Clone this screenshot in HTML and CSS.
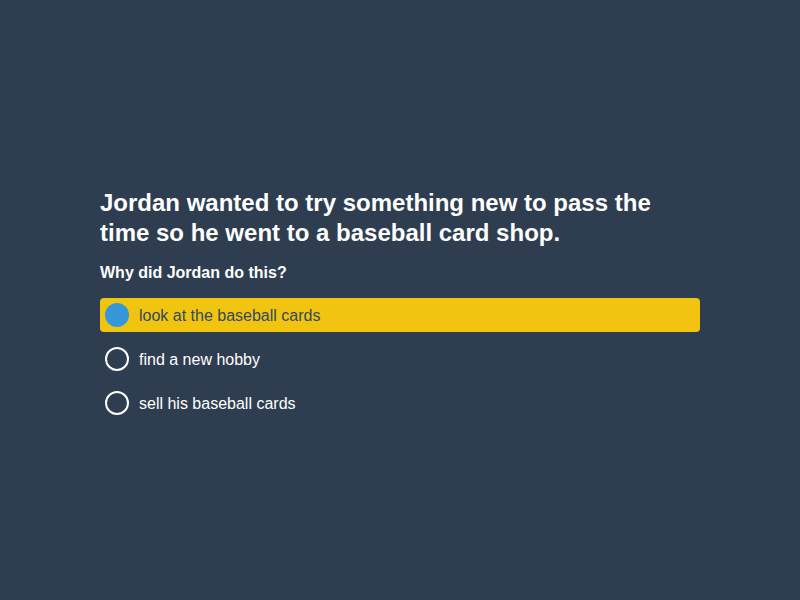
FILE: index.html
```html
<!DOCTYPE html>
<html>
<head>
<meta charset="utf-8">
<link rel="stylesheet" href="styles.css">
</head>
<body>
<main class="quiz">
  <h1 class="prompt">Jordan wanted to try something new to pass the time so he went to a baseball card shop.</h1>
  <p class="question">Why did Jordan do this?</p>
  <ul class="options">
    <li class="option selected"><span class="radio"></span><span class="label">look at the baseball cards</span></li>
    <li class="option"><span class="radio"></span><span class="label">find a new hobby</span></li>
    <li class="option"><span class="radio"></span><span class="label">sell his baseball cards</span></li>
  </ul>
</main>
</body>
</html>
```
FILE: styles.css
```css
html, body {
  margin: 0;
  padding: 0;
  background: #2e3e50;
  height: 100%;
}
body {
  font-family: "Liberation Sans", Arial, sans-serif;
  color: #ffffff;
}
.quiz {
  width: 600px;
  margin-left: 100px;
  padding-top: 188px;
}
.prompt {
  margin: 0;
  font-size: 24px;
  line-height: 30px;
  font-weight: bold;
  width: 560px;
}
.question {
  margin: 14px 0 0;
  padding-top: 1px;
  font-size: 16px;
  line-height: 20px;
  font-weight: bold;
}
.options {
  list-style: none;
  margin: 15px 0 0;
  padding: 0;
  display: flex;
  flex-direction: column;
  gap: 10px;
}
.option {
  display: flex;
  align-items: center;
  gap: 10px;
  height: 34px;
  padding: 0 5px;
  border-radius: 4px;
  font-size: 16px;
}
.label {
  padding-top: 2px;
}
.radio {
  width: 20px;
  height: 20px;
  border: 2px solid #ffffff;
  border-radius: 50%;
  flex: none;
}
.option.selected {
  background: #f1c40f;
  color: #34495e;
}
.option.selected .radio {
  background: #3498db;
  border-color: #3498db;
}
```
